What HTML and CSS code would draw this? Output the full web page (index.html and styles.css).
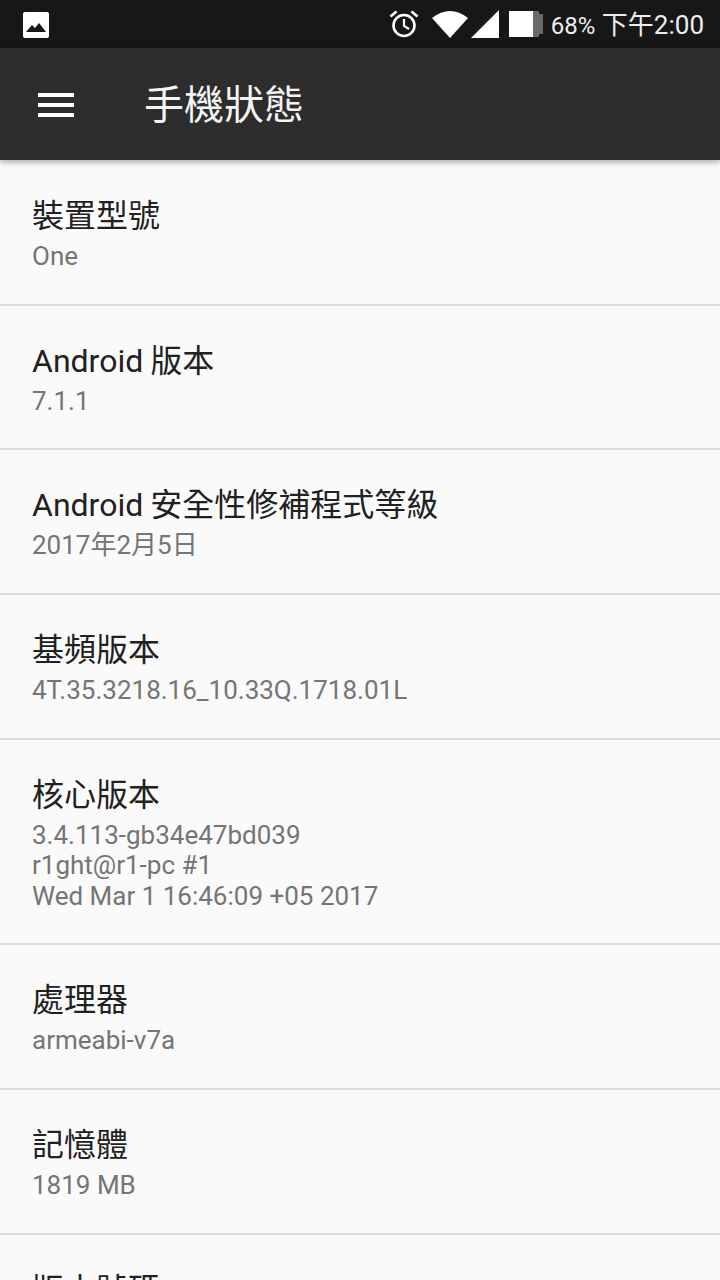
FILE: index.html
```html
<!DOCTYPE html>
<html lang="zh-Hant">
<head>
<meta charset="utf-8">
<title>手機狀態</title>
<link rel="stylesheet" href="styles.css">
</head>
<body>
<div class="status">
  <svg class="pic" viewBox="0 0 26 26"><path d="M2 0h22a2 2 0 0 1 2 2v22a2 2 0 0 1-2 2H2a2 2 0 0 1-2-2V2a2 2 0 0 1 2-2z" fill="#fff"/><path d="M3 20l6-7 3 3 4-5 7 9z" fill="#171717"/></svg>
  <div class="status-right">
    <svg class="alarm" viewBox="0 0 30 30" fill="none" stroke="#fff"><circle cx="15" cy="16.500" r="10.500" stroke-width="2.600"/><path d="M15 10v7l5 3" stroke-width="2.200"/><path d="M1.500 7.500L7.500 2.500M28.500 7.500L22.500 2.500" stroke-width="2.800"/></svg>
    <svg class="wifi" viewBox="0 0 36 28"><path d="M0 8Q18-6 36 8L18 28z" fill="#fff"/></svg>
    <svg class="signal" viewBox="0 0 28 28"><path d="M0 28L28 0v28z" fill="#fff"/></svg>
    <svg class="battery" viewBox="0 0 34 26"><path d="M0 0h24v26H0z" fill="#fff"/><path d="M24 0h6v3h4v20h-4v3h-6z" fill="#6a6a6a"/></svg>
    <span class="clock"><span class="pct">68%</span> 下午2:00</span>
  </div>
</div>
<header class="appbar">
  <div class="menu"><i></i><i></i><i></i></div>
  <h1>手機狀態</h1>
</header>
<main class="list">
  <section class="row"><h2>裝置型號</h2><p>One</p></section>
  <section class="row"><h2>Android 版本</h2><p>7.1.1</p></section>
  <section class="row"><h2>Android 安全性修補程式等級</h2><p>2017年2月5日</p></section>
  <section class="row"><h2>基頻版本</h2><p>4T.35.3218.16_10.33Q.1718.01L</p></section>
  <section class="row"><h2>核心版本</h2><p>3.4.113-gb34e47bd039<br>r1ght@r1-pc #1<br>Wed Mar 1 16:46:09 +05 2017</p></section>
  <section class="row"><h2>處理器</h2><p>armeabi-v7a</p></section>
  <section class="row"><h2>記憶體</h2><p>1819 MB</p></section>
  <section class="row last"><h2>版本號碼</h2></section>
</main>
</body>
</html>
```
FILE: styles.css
```css
* { box-sizing: border-box; }
html, body { margin: 0; padding: 0; height: 1280px; overflow: hidden; }
body { background: #fafafa; font-family: Roboto, "Noto Sans CJK TC", sans-serif; }
.status { height: 48px; background: #171717; display: flex; align-items: center; justify-content: space-between; padding: 0 16px 0 23px; }
.pic { width: 26px; height: 26px; display: block; margin-top: 1px; }
.status-right { display: flex; align-items: center; }
.alarm { width: 30px; height: 30px; margin-right: 13px; }
.wifi { width: 36px; height: 28px; margin-right: 3px; margin-top: -1px; }
.signal { width: 28px; height: 28px; margin-right: 10px; margin-top: -1px; }
.battery { width: 34px; height: 26px; margin-top: 0; margin-right: 8px; }
.clock { color: #fff; font-size: 26px; line-height: 48px; white-space: nowrap; opacity: .93; position: relative; top: 1px; }
.pct { font-size: 24px; }
.appbar { height: 112px; background: #2d2d2d; display: flex; align-items: center; position: relative; z-index: 1; box-shadow: 0 2px 6px rgba(0,0,0,.35); }
.menu { width: 36px; margin-left: 38px; margin-right: 70px; display: flex; flex-direction: column; gap: 6px; margin-top: 1px; }
.menu i { display: block; height: 4px; background: #fff; }
.appbar h1 { margin: 3px 0 0; font-size: 40px; font-weight: 400; color: #f4f4f4; line-height: 1; }
.list { padding-top: 1px; }
.row { padding: 36px 32px 32.170px; border-bottom: 2px solid #dcdcdc; }
.row.last { border-bottom: 0; }
.row h2 { margin: 0; font-size: 32px; font-weight: 400; line-height: 38px; color: #212121; word-spacing: -1px; }
.row p { margin: 6px 0 0; font-size: 26px; line-height: 30.500px; color: #757575; }
```
